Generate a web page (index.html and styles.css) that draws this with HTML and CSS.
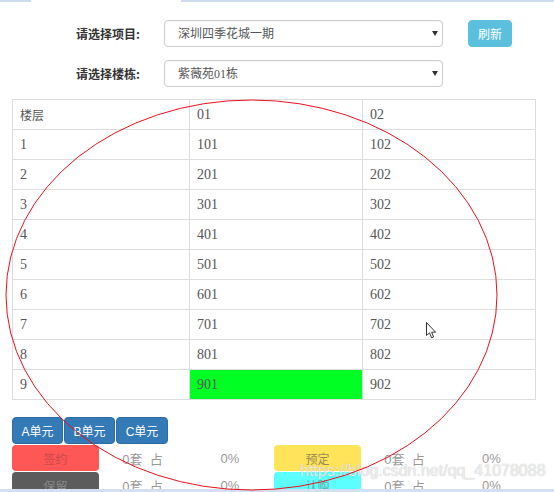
FILE: index.html
```html
<!DOCTYPE html>
<html lang="zh">
<head>
<meta charset="utf-8">
<title>楼栋</title>
<link rel="stylesheet" href="styles.css">
</head>
<body>
<div class="tabbar"><span class="tab-line tl-left"></span><span class="tab-gap"></span><span class="tab-line tl-right"></span></div>
<div class="form">
  <div class="form-row">
    <label class="form-label">请选择项目:</label>
    <div class="select"><span class="select-text">深圳四季花城一期</span><span class="caret"></span></div>
    <button class="btn-refresh">刷新</button>
  </div>
  <div class="form-row">
    <label class="form-label">请选择楼栋:</label>
    <div class="select"><span class="select-text">紫薇苑01栋</span><span class="caret"></span></div>
  </div>
</div>
<table class="floor-table">
  <tr><td class="cjk">楼层</td><td>01</td><td>02</td></tr>
  <tr><td>1</td><td>101</td><td>102</td></tr>
  <tr><td>2</td><td>201</td><td>202</td></tr>
  <tr><td>3</td><td>301</td><td>302</td></tr>
  <tr><td>4</td><td>401</td><td>402</td></tr>
  <tr><td>5</td><td>501</td><td>502</td></tr>
  <tr><td>6</td><td>601</td><td>602</td></tr>
  <tr><td>7</td><td>701</td><td>702</td></tr>
  <tr><td>8</td><td>801</td><td>802</td></tr>
  <tr><td>9</td><td class="sold">901</td><td>902</td></tr>
</table>
<div class="units">
  <button class="unit-btn">A单元</button>
  <button class="unit-btn">B单元</button>
  <button class="unit-btn">C单元</button>
</div>
<div class="legend">
  <div class="box box-red">签约</div><div class="cell">0套&nbsp;&nbsp;占</div><div class="cell">0%</div>
  <div class="box box-yellow">预定</div><div class="cell">0套&nbsp;&nbsp;占</div><div class="cell">0%</div>
  <div class="box box-gray">保留</div><div class="cell">0套&nbsp;&nbsp;占</div><div class="cell">0%</div>
  <div class="box box-cyan">认购</div><div class="cell">0套&nbsp;&nbsp;占</div><div class="cell">0%</div>
</div>
<div class="bottom-line"></div>
<div class="watermark">https://blog.csdn.net/qq_41078088</div>
<svg class="annotation" width="554" height="492" viewBox="0 0 554 492">
  <ellipse cx="251.5" cy="295" rx="245.5" ry="195" fill="none" stroke="#e8101c" stroke-width="1"/>
</svg>
<svg class="cursor" width="12" height="18" viewBox="0 0 12 18">
  <path d="M0.5 0.5 L0.5 13.5 L3.5 10.8 L5.6 15.8 L7.6 15 L5.6 10.2 L9.6 10.2 Z" fill="#fff" stroke="#333" stroke-width="1" stroke-linejoin="round"/>
</svg>
</body>
</html>
```
FILE: styles.css
```css
html, body {
  margin: 0;
  padding: 0;
  background: #fff;
  width: 554px;
  height: 492px;
  overflow: hidden;
  position: relative;
  font-family: "Noto Sans CJK SC", "Liberation Sans", sans-serif;
  font-size: 12px;
  color: #555;
}
.tabbar {
  display: flex;
  height: 2px;
}
.tab-line {
  display: block;
  height: 2px;
  background: #cddbef;
}
.tl-left { width: 31px; }
.tab-gap { width: 150px; }
.tl-right { flex: 1; }

.form {
  padding-top: 18px;
}
.form-row {
  display: flex;
  align-items: center;
  height: 26px;
  margin-bottom: 14px;
}
.form-label {
  width: 140px;
  margin-right: 24px;
  text-align: right;
  font-weight: bold;
  color: #333;
  font-size: 12px;
}
.select {
  box-sizing: border-box;
  width: 279px;
  height: 27px;
  border: 1px solid #ccc;
  border-radius: 4px;
  display: flex;
  align-items: center;
  justify-content: space-between;
  padding: 0 4px 0 13px;
  box-shadow: inset 0 1px 1px rgba(0,0,0,0.05);
}
.select-text {
  font-family: "Liberation Serif", "Noto Sans CJK SC", serif;
  font-size: 12px;
  color: #555;
}
.caret {
  width: 0;
  height: 0;
  border-left: 3px solid transparent;
  border-right: 3px solid transparent;
  border-top: 5px solid #333;
}
.btn-refresh {
  margin-left: 25px;
  width: 44px;
  height: 27px;
  border: 1px solid #5bc0de;
  border-radius: 4px;
  background: #5bc0de;
  color: #fff;
  font-family: "Noto Sans CJK SC", sans-serif;
  font-size: 12px;
  padding: 0;
}

.floor-table {
  margin: -1px 0 0 12px;
  width: 524px;
  border-collapse: collapse;
  table-layout: fixed;
}
.floor-table td {
  border: 1px solid #ddd;
  height: 29px;
  padding: 0 0 0 7px;
  font-family: "Liberation Serif", "Noto Sans CJK SC", serif;
  font-size: 14px;
  color: #555;
  vertical-align: middle;
}
.floor-table td:nth-child(1) { width: 169px; }
.floor-table td:nth-child(2) { width: 165px; }
.floor-table td.cjk {
  font-family: "Noto Sans CJK SC", sans-serif;
  font-size: 12px;
}
.floor-table td.sold {
  background: #00ff22;
}

.units {
  display: flex;
  gap: 1px;
  margin: 17px 0 0 12px;
}
.unit-btn {
  height: 27px;
  width: 51px;
  padding: 0;
  border: 1px solid #2e6da4;
  border-radius: 4px;
  background: #337ab7;
  color: #fff;
  font-family: "Liberation Sans", "Noto Sans CJK SC", sans-serif;
  font-size: 12px;
}
.unit-btn:last-child { width: 52px; }

.legend {
  display: grid;
  grid-template-columns: 87px 87px 88px 87px 87px 87px;
  grid-auto-rows: 26px;
  row-gap: 1px;
  margin: 1px 0 0 12px;
}
.box {
  border-radius: 4px;
  display: flex;
  align-items: center;
  justify-content: center;
  font-size: 12px;
}
.box-red { background: #ff5656; color: #c84a4a; }
.box-yellow { background: #ffe45a; color: #9a8a52; }
.box-gray { background: #5c5c5c; color: #888; }
.box-cyan { background: #5cffff; color: #6aa8a8; }
.cell {
  display: flex;
  align-items: center;
  justify-content: center;
  color: #999;
  font-family: "Liberation Sans", "Noto Sans CJK SC", sans-serif;
  font-size: 13px;
}

.bottom-line {
  position: absolute;
  left: 0;
  top: 489px;
  width: 554px;
  height: 3px;
  background: #d3dff0;
}
.watermark {
  position: absolute;
  left: 300px;
  top: 462px;
  font-family: "Liberation Sans", sans-serif;
  font-size: 16px;
  color: rgba(255,255,255,0.75);
  text-shadow: 0 0 1px rgba(120,120,120,0.6);
  white-space: nowrap;
}
.annotation {
  position: absolute;
  left: 0;
  top: 0;
  pointer-events: none;
}
.cursor {
  position: absolute;
  left: 426px;
  top: 322px;
}
```
